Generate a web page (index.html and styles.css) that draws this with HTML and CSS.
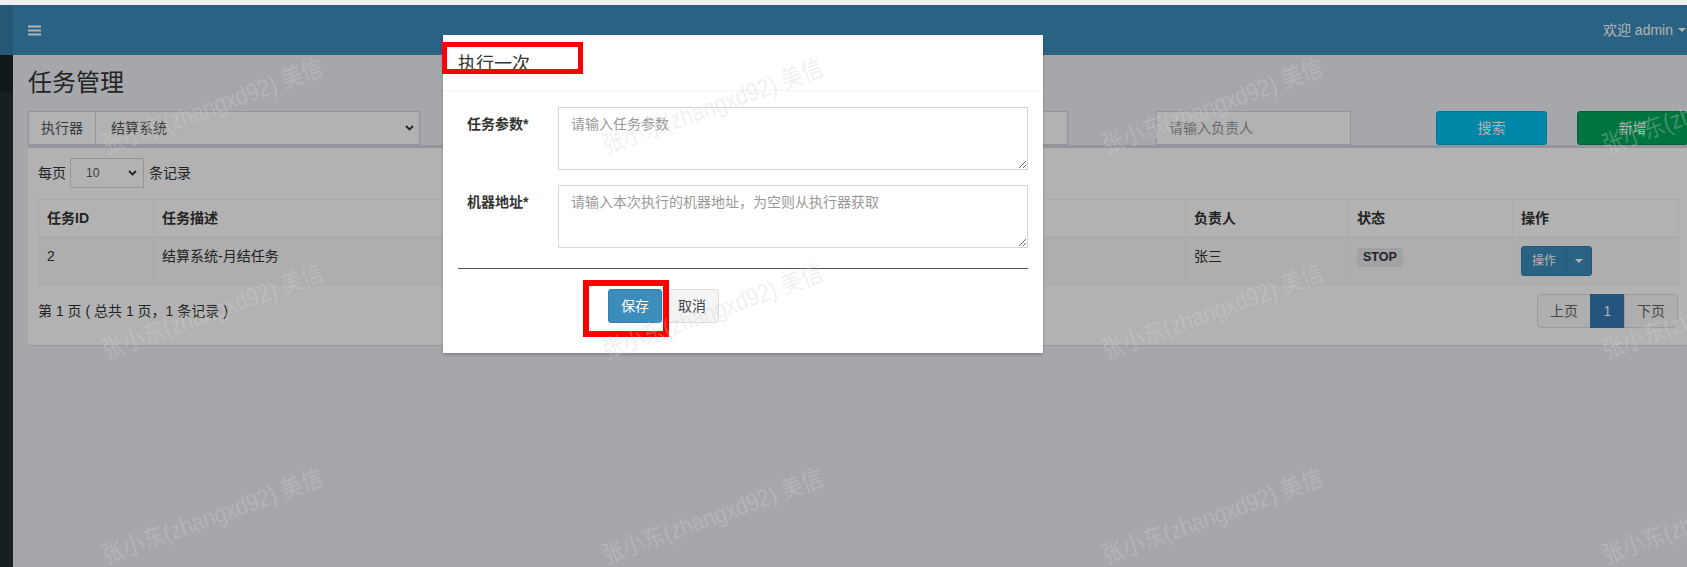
FILE: index.html
```html
<!DOCTYPE html>
<html lang="zh-CN">
<head>
<meta charset="utf-8">
<title>任务管理</title>
<link rel="stylesheet" href="styles.css">
</head>
<body>
<div class="topstrip"></div>
<div class="app">
  <aside class="sidebar">
    <div class="sb-logo"></div>
    <div class="sb-user"></div>
    <div class="sb-menu"></div>
  </aside>
  <div class="main">
    <header class="navbar">
      <svg class="toggle" width="13" height="11" viewBox="0 0 13 11"><rect x="0" y="0.5" width="13" height="2"/><rect x="0" y="4.5" width="13" height="2"/><rect x="0" y="8.5" width="13" height="2"/></svg>
      <div class="user-menu">欢迎 admin<span class="caret"></span></div>
    </header>
    <section class="content">
      <h1 class="page-title">任务管理</h1>
      <div class="filters">
        <div class="input-group">
          <span class="addon">执行器</span>
          <div class="select">结算系统<svg class="chev" width="9" height="6" viewBox="0 0 9 6"><path d="M1 1 L4.5 4.5 L8 1"/></svg></div>
        </div>
        <input class="input f-desc" placeholder="请输入任务描述">
        <input class="input f-author" placeholder="请输入负责人">
        <button class="btn btn-info f-search">搜索</button>
        <button class="btn btn-success f-add">新增</button>
      </div>
      <div class="box">
        <div class="length">每页<div class="select select-sm">10<svg class="chev" width="9" height="6" viewBox="0 0 9 6"><path d="M1 1 L4.5 4.5 L8 1"/></svg></div>条记录</div>
        <table class="table">
          <colgroup>
            <col class="c1"><col class="c2"><col class="c3"><col class="c4"><col class="c5"><col class="c6"><col class="c7">
          </colgroup>
          <thead>
            <tr><th>任务ID</th><th>任务描述</th><th>调度类型</th><th>运行模式</th><th>负责人</th><th>状态</th><th>操作</th></tr>
          </thead>
          <tbody>
            <tr>
              <td>2</td><td>结算系统-月结任务</td><td>CRON：0 0 1 1 * ?</td><td>BEAN：monthSettleJobHandler</td><td>张三</td>
              <td><span class="label">STOP</span></td>
              <td><span class="btn-group"><span class="bg-main">操作</span><span class="bg-caret"><span class="caret"></span></span></span></td>
            </tr>
          </tbody>
        </table>
        <div class="foot">
          <span class="info">第 1 页 ( 总共 1 页，1 条记录 )</span>
          <ul class="pagination">
            <li class="pg">上页</li>
            <li class="pg active">1</li>
            <li class="pg">下页</li>
          </ul>
        </div>
      </div>
    </section>
  </div>
  <div class="backdrop"></div>
  <div class="modal">
    <div class="modal-header">
      <h4 class="modal-title">执行一次</h4>
    </div>
    <div class="modal-body">
      <div class="form-row">
        <label class="control-label">任务参数*</label>
        <textarea class="textarea" placeholder="请输入任务参数"></textarea>
      </div>
      <div class="form-row last">
        <label class="control-label">机器地址*</label>
        <textarea class="textarea" placeholder="请输入本次执行的机器地址，为空则从执行器获取"></textarea>
      </div>
      <hr class="divider">
      <div class="actions">
        <button class="btn btn-primary">保存</button>
        <button class="btn btn-default">取消</button>
      </div>
    </div>
    <div class="annot annot-title"></div>
    <div class="annot annot-save"></div>
  </div>
</div>
<div class="watermarks">
  <div class="wm-grid">
    <div class="wm"><span>张小东(zhangxd92) 美信</span></div>
    <div class="wm"><span>张小东(zhangxd92) 美信</span></div>
    <div class="wm"><span>张小东(zhangxd92) 美信</span></div>
    <div class="wm"><span>张小东(zhangxd92) 美信</span></div>
    <div class="wm"><span>张小东(zhangxd92) 美信</span></div>
    <div class="wm"><span>张小东(zhangxd92) 美信</span></div>
    <div class="wm"><span>张小东(zhangxd92) 美信</span></div>
    <div class="wm"><span>张小东(zhangxd92) 美信</span></div>
    <div class="wm"><span>张小东(zhangxd92) 美信</span></div>
    <div class="wm"><span>张小东(zhangxd92) 美信</span></div>
    <div class="wm"><span>张小东(zhangxd92) 美信</span></div>
    <div class="wm"><span>张小东(zhangxd92) 美信</span></div>
  </div>
</div>
</body>
</html>
```

FILE: styles.css
```css
* { box-sizing: border-box; }
html, body { margin: 0; padding: 0; }
body {
  width: 1687px;
  height: 567px;
  overflow: hidden;
  position: relative;
  background: #ecf0f5;
  font-family: "Liberation Sans", "Noto Sans CJK SC", sans-serif;
  font-size: 14px;
  line-height: 20px;
  color: #333;
}
.topstrip { height: 5px; background: #efefef; }
.app { position: relative; display: flex; height: 562px; overflow: hidden; }

.sidebar { width: 13px; flex-shrink: 0; display: flex; flex-direction: column; background: #222d32; }
.sb-logo { height: 50px; background: #367fa9; }
.sb-user { height: 37px; background: #1a2226; }
.sb-menu { flex: 1; background: #222d32; }

.main { flex: 1; display: flex; flex-direction: column; overflow: hidden; }
.navbar {
  height: 50px; flex-shrink: 0;
  background: #3c8dbc;
  display: flex; align-items: center; justify-content: space-between;
  padding: 0 1px 0 15px;
}
.toggle { fill: #fff; display: block; }
.user-menu { color: #fff; display: flex; align-items: center; white-space: nowrap; }
.caret {
  display: inline-block; width: 0; height: 0;
  border-top: 4px solid #fff; border-left: 4px solid transparent; border-right: 4px solid transparent;
}
.user-menu .caret { margin-left: 5px; }

.content { padding: 15px 0 0 15px; }
.page-title { margin: 0; font-size: 24px; line-height: 26px; font-weight: 400; color: #333; }

.filters { display: flex; height: 34px; margin-top: 15px; }
.filters > * { flex-shrink: 0; }
.input-group { display: flex; width: 392px; height: 34px; }
.addon {
  border: 1px solid #d2d6de; border-right: 0; background: #fff;
  padding: 6px 12px; color: #555; white-space: nowrap;
}
.select {
  display: flex; align-items: center; justify-content: space-between;
  border: 1px solid #d2d6de; background: #fff; color: #555;
}
.input-group .select { flex: 1; padding: 0 5px 0 15px; }
.chev { fill: none; stroke: #333; stroke-width: 1.8; display: block; }
.input {
  height: 34px; border: 1px solid #d2d6de; background: #fff;
  padding: 6px 12px; font: inherit; color: #555; outline: none;
}
.input::placeholder { color: #999; }
.f-desc { margin-left: 30px; width: 618px; }
.f-author { margin-left: 88px; width: 195px; }
.btn {
  font: inherit; line-height: 20px; padding: 6px 12px;
  border: 1px solid transparent; border-radius: 3px; cursor: pointer;
}
.btn-info { background: #00c0ef; border-color: #00acd6; color: #fff; }
.btn-success { background: #00a65a; border-color: #008d4c; color: #fff; }
.f-search { margin-left: 85px; width: 111px; height: 34px; }
.f-add { margin-left: 30px; width: 111px; height: 34px; }

.box {
  margin-right: -1px;
  background: #fff;
  border-top: 3px solid #d2d6de;
  border-radius: 3px;
  box-shadow: 0 1px 1px rgba(0,0,0,0.1);
  padding: 10px 10px 10px;
}
.length { display: flex; align-items: center; height: 30px; }
.select-sm { width: 74px; height: 30px; margin: 0 5px 0 4px; padding: 0 6px 0 15px; font-size: 12px; }

.table { width: 1640px; border-collapse: collapse; table-layout: fixed; margin-top: 11px; }
.c1 { width: 115px; } .c2 { width: 330px; } .c3 { width: 300px; } .c4 { width: 402px; }
.c5 { width: 163px; } .c6 { width: 164px; } .c7 { width: 166px; }
.table th, .table td {
  border: 1px solid #f4f4f4; padding: 8px; text-align: left; vertical-align: top;
  white-space: nowrap; overflow: hidden;
}
.table th { font-weight: 700; border-bottom-width: 2px; }
.table tbody tr { background: #f9f9f9; }
.label {
  display: inline-block; font-size: 12.5px; font-weight: 700; line-height: 13px;
  padding: 3px 6px 3px; border-radius: 3px; background: #e6e8ed; color: #333;
}
.btn-group { display: inline-flex; height: 30px; font-size: 12px; line-height: 18px; color: #fff; }
.bg-main {
  background: #3c8dbc; border: 1px solid #367fa9; border-radius: 3px 0 0 3px;
  padding: 5px 10px; width: 46px;
}
.bg-caret {
  background: #3c8dbc; border: 1px solid #367fa9; margin-left: -1px;
  border-radius: 0 3px 3px 0; width: 26px; display: flex; align-items: center; justify-content: center;
}

.foot { display: flex; align-items: center; justify-content: space-between; margin-top: 9px; margin-bottom: 7px; }
.pagination { display: flex; list-style: none; margin: 0; padding: 0; }
.pg {
  padding: 6px 12px; line-height: 20px; border: 1px solid #ddd; background: #fafafa; color: #666;
  margin-left: -1px;
}
.pg:first-child { margin-left: 0; border-radius: 4px 0 0 4px; }
.pg:last-child { border-radius: 0 4px 4px 0; }
.pg.active { background: #337ab7; border-color: #337ab7; color: #fff; width: 35px; text-align: center; }

.backdrop { position: absolute; inset: 0; background: rgba(0,0,0,0.3); }
.modal {
  position: absolute; left: 443px; top: 30px; width: 600px;
  background: #fff; box-shadow: 0 2px 3px rgba(0,0,0,0.2);
}
.modal-header { padding: 17px 15px 13px; border-bottom: 1px solid #f4f4f4; }
.modal-title { margin: 0; font-size: 18px; line-height: 25px; font-weight: 400; color: #333; }
.modal-body { padding: 16px 15px 30px; }
.form-row { display: flex; margin-bottom: 15px; }
.form-row.last { margin-bottom: 20px; }
.control-label { width: 100px; padding: 7px 0 0 9px; font-weight: 700; color: #333; }
.textarea {
  width: 470px; height: 63px; border: 1px solid #d2d6de; padding: 6px 12px;
  font: inherit; color: #555; outline: none; display: block; margin: 0;
}
.textarea::placeholder { color: #999; }
.divider { border: 0; border-top: 1px solid #555; margin: 0 0 20px; height: 0; }
.actions { padding-left: 150px; display: flex; }
.btn-primary { background: #3c8dbc; border-color: #367fa9; color: #fff; }
.btn-default { background: #f4f4f4; border-color: #ddd; color: #444; margin-left: 3px; }
.annot { position: absolute; border: 5px solid #ff0000; }
.annot-title { left: -1px; top: 7px; width: 141px; height: 32px; }
.annot-save { left: 140px; top: 245px; width: 86px; height: 57px; border-width: 6px; }

.watermarks {
  position: absolute; inset: 0; overflow: hidden;
  pointer-events: none; z-index: 10;
}
.wm-grid {
  margin-left: -38px; margin-top: 3px;
  display: grid; grid-template-columns: repeat(4, 500px); grid-template-rows: repeat(3, 205px);
}
.wm { display: flex; align-items: center; justify-content: center; }
.wm span {
  transform: rotate(-20deg) scaleX(0.86); font-size: 25px; line-height: 28px;
  color: rgba(210,210,210,0.32); white-space: nowrap;
}
```
